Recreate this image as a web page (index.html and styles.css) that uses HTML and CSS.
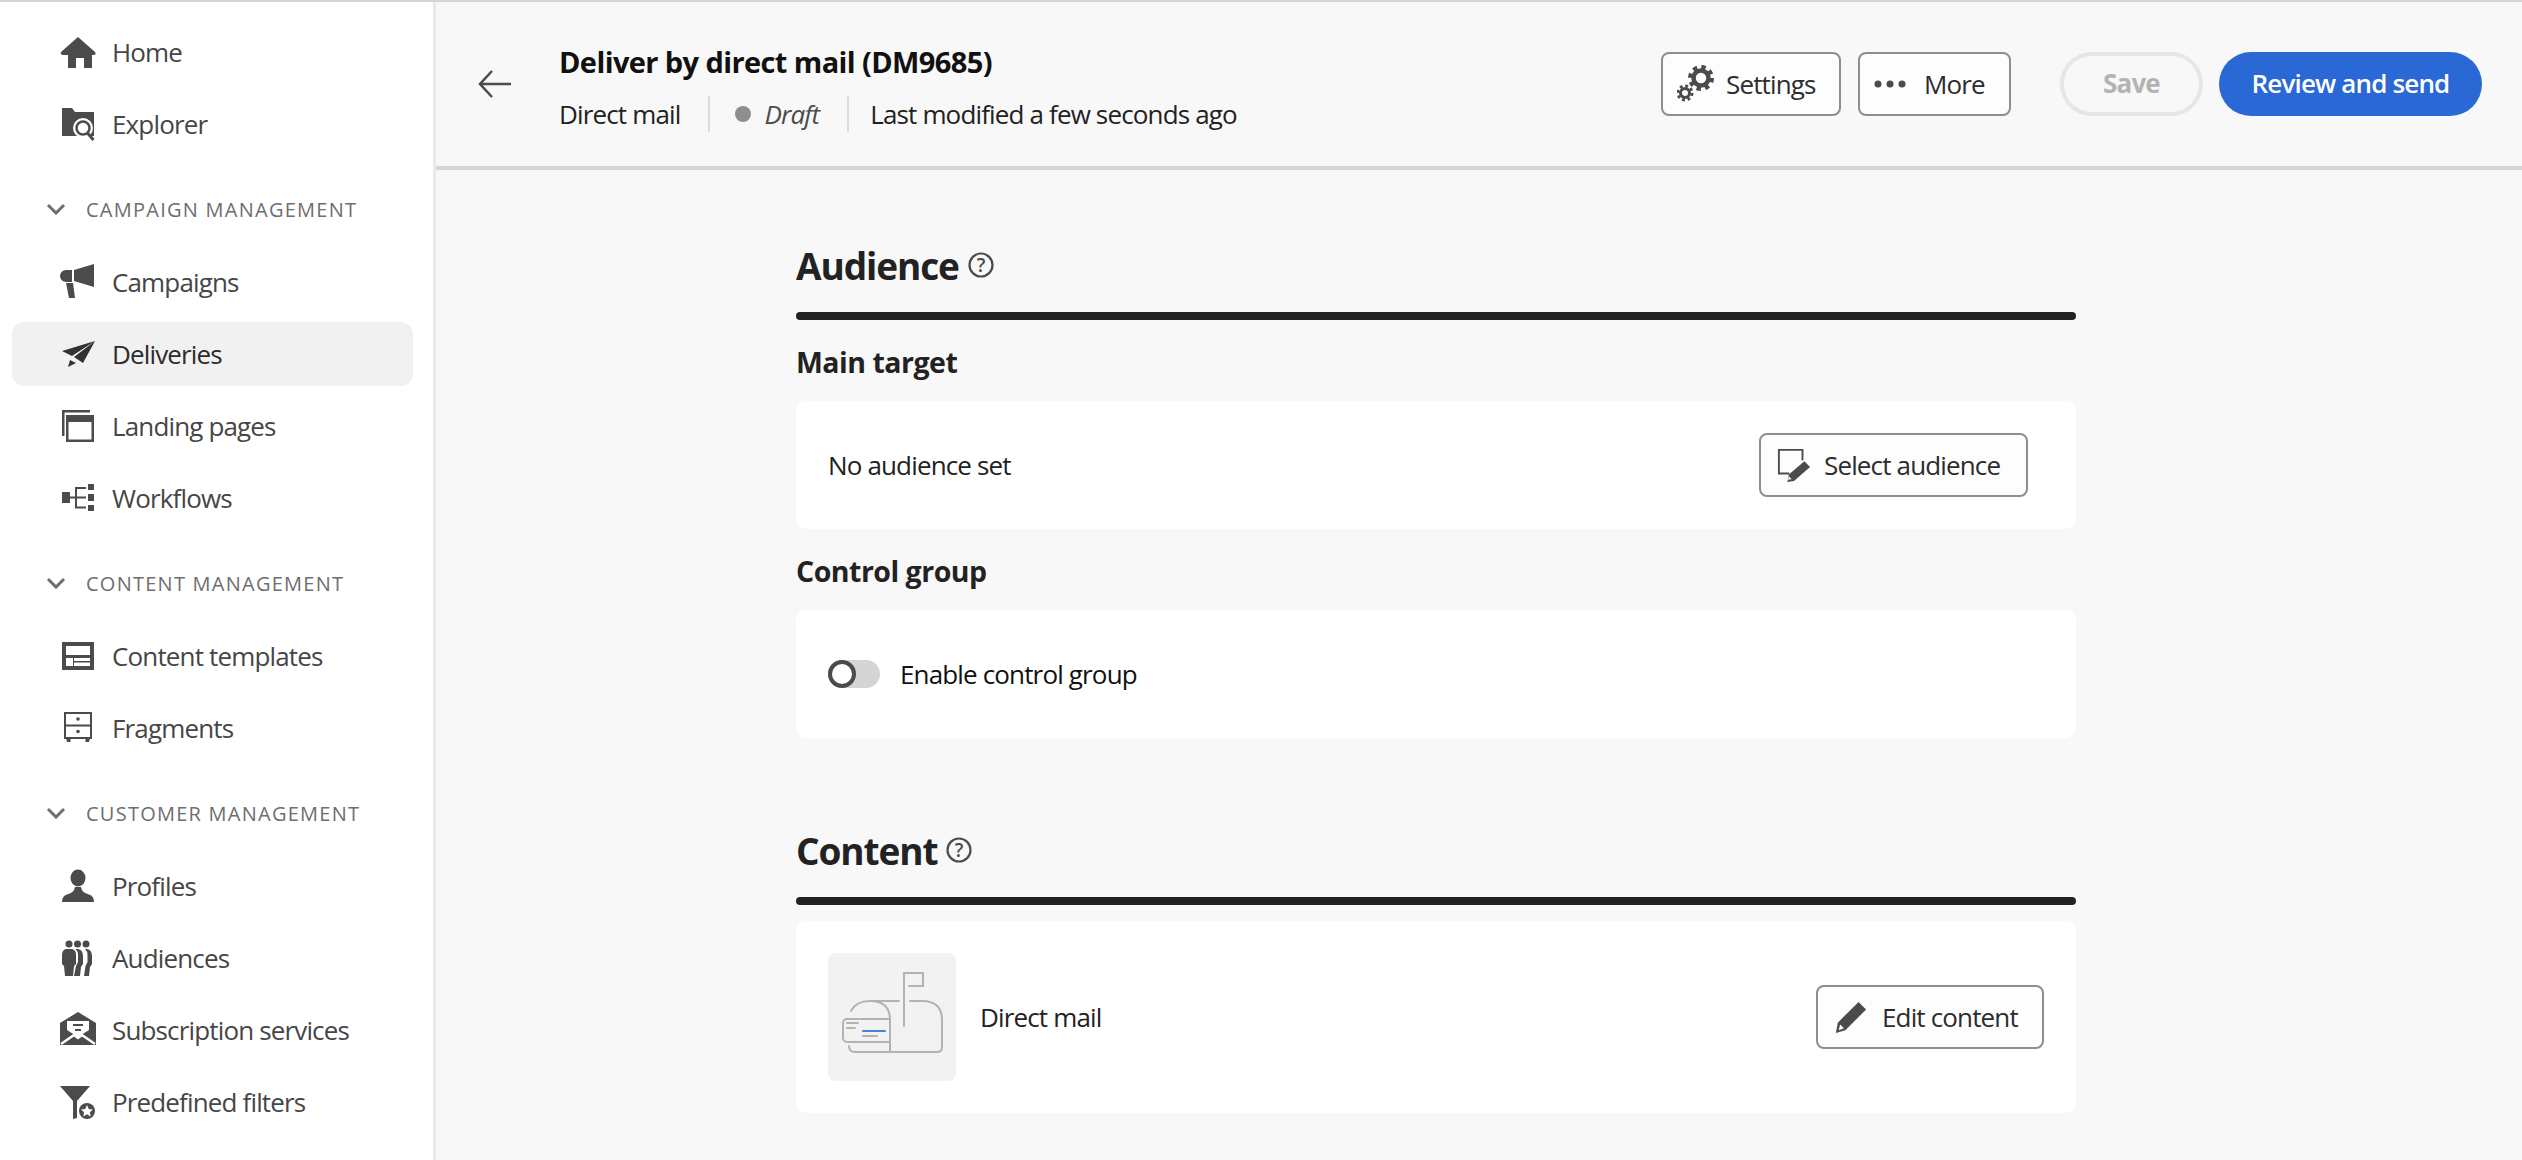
FILE: index.html
```html
<!DOCTYPE html>
<html lang="en">
<head>
  <meta charset="UTF-8" />
  <title>Deliver by direct mail (DM9685)</title>
  <link rel="stylesheet" href="styles.css">
</head>
<body>
<div class="app">

  <!-- left nav -->
  <nav class="sidebar">
    <a class="nav-item">
      <svg class="nav-icon" viewBox="0 0 36 36"><path d="M18 3 35 18q1.500 2.500-1 3h-2v13h-8V24h-8v10H8V21H3q-3-.5-2-3z"/></svg>
      <span>Home</span>
    </a>
    <a class="nav-item">
      <svg class="nav-icon" viewBox="0 0 36 36"><path d="M2 2h10l3 4h19v24H2z"/><circle cx="23" cy="22" r="10" fill="#fff"/><circle cx="23" cy="22" r="6.500" fill="none" stroke="#4b4b4b" stroke-width="2.500"/><path d="m27.500 27 6 7" stroke="#4b4b4b" stroke-width="3" fill="none"/></svg>
      <span>Explorer</span>
    </a>

    <div class="nav-section">
      <svg class="chevron" viewBox="0 0 20 12"><path d="M2 2l8 8 8-8" fill="none" stroke="#6e6e6e" stroke-width="3"/></svg>
      <span>CAMPAIGN MANAGEMENT</span>
    </div>
    <a class="nav-item">
      <svg class="nav-icon" viewBox="0 0 36 36"><path d="M14 6 34 0v23l-20-6zM12 6H6a6 6 0 0 0 0 12h6zM6 19h7l2 15H9z"/></svg>
      <span>Campaigns</span>
    </a>
    <a class="nav-item active">
      <svg class="nav-icon" viewBox="0 0 36 36"><path d="M35 5 2 15l10 5zM35 5 14 21l9 6zM10 24l6 3-8 4z"/></svg>
      <span>Deliveries</span>
    </a>
    <a class="nav-item">
      <svg class="nav-icon" viewBox="0 0 36 36"><path d="M2 2h28v2.500H4.500V28H2z"/><path d="M6 7h28v27H6zm2.500 7v17.500h23V14z" fill-rule="evenodd"/></svg>
      <span>Landing pages</span>
    </a>
    <a class="nav-item">
      <svg class="nav-icon" viewBox="0 0 36 36"><path d="M2 12h8v11H2zM28 4h6v6h-6zM28 14h6v7h-6zM28 25h6v6h-6z"/><path d="M10 17.500h16M16 17.500V8h10M16 17.500V27.500h10" fill="none" stroke="#4b4b4b" stroke-width="2"/></svg>
      <span>Workflows</span>
    </a>

    <div class="nav-section">
      <svg class="chevron" viewBox="0 0 20 12"><path d="M2 2l8 8 8-8" fill="none" stroke="#6e6e6e" stroke-width="3"/></svg>
      <span>CONTENT MANAGEMENT</span>
    </div>
    <a class="nav-item">
      <svg class="nav-icon" viewBox="0 0 36 36"><path fill-rule="evenodd" d="M2 4h32v28H2zM6 8v9h24V8zM6 20v8h7v-8zM14 20v3h16v-3zM14 24.500V28h16v-3.500z"/></svg>
      <span>Content templates</span>
    </a>
    <a class="nav-item">
      <svg class="nav-icon" viewBox="0 0 36 36"><path d="M5 3h26v25H5zM5 15.500h26" fill="none" stroke="#4b4b4b" stroke-width="2"/><circle cx="18" cy="9" r="1.800"/><circle cx="18" cy="21.500" r="1.800"/><path d="M6 28h4.500v4H7zM25.500 28H30l-1 4h-3.500z"/></svg>
      <span>Fragments</span>
    </a>

    <div class="nav-section">
      <svg class="chevron" viewBox="0 0 20 12"><path d="M2 2l8 8 8-8" fill="none" stroke="#6e6e6e" stroke-width="3"/></svg>
      <span>CUSTOMER MANAGEMENT</span>
    </div>
    <a class="nav-item">
      <svg class="nav-icon" viewBox="0 0 36 36"><ellipse cx="18" cy="10" rx="7.500" ry="8.500"/><path d="M2 34q0-6 5-7.500 6-2 7-4.500l1-3h6l1 3q1 2.500 7 4.500 5 1.500 5 7.500z"/></svg>
      <span>Profiles</span>
    </a>
    <a class="nav-item">
      <svg class="nav-icon" viewBox="0 0 36 36"><circle cx="9" cy="4" r="3.500"/><circle cx="17.500" cy="4" r="3.500"/><circle cx="26" cy="4" r="3.500"/><path d="M27 9q5 1 5 7v8l-2 3-1 9h-5l1.500-10 2-4v-7q0-4-2.500-6z"/><path d="M18 9q5 1 5 7v8l-2 3-1 9h-6l2-10 2-4v-7q0-4-2.500-6z"/><path d="M6 9h6q4 1 4 6v9l-2 2-1 10H5L4 26l-2-2v-9q0-5 4-6z"/></svg>
      <span>Audiences</span>
    </a>
    <a class="nav-item">
      <svg class="nav-icon" viewBox="0 0 36 36"><path d="M18 0 36 11v22H0V11z"/><path d="M7 9h22v9l-11 7-11-7z" fill="#fff"/><path d="M13 13h10M15 18h6" stroke="#4b4b4b" stroke-width="2"/><path d="M1 32l13-9 4 3 4-3 13 9" fill="none" stroke="#fff" stroke-width="2.500"/></svg>
      <span>Subscription services</span>
    </a>
    <a class="nav-item">
      <svg class="nav-icon" viewBox="0 0 36 36"><path d="M0 2h30L17 17v17l-4 1V17z"/><circle cx="27" cy="27" r="10" fill="#fff"/><circle cx="27" cy="27" r="8"/><path d="m27 21 1.800 3.900 4.200.500-3.100 2.800.8 4.200-3.700-2.100-3.700 2.100.8-4.200-3.100-2.800 4.200-.5z" fill="#fff"/></svg>
      <span>Predefined filters</span>
    </a>
  </nav>

  <div class="page">
    <header class="topbar">
      <svg class="back" viewBox="0 0 36 32"><path d="M34 16H3M15 3 3 16l12 13" fill="none" stroke="#4b4b4b" stroke-width="2.500"/></svg>
      <div class="title-block">
        <div class="title">Deliver by direct mail (DM9685)</div>
        <div class="meta">
          <span class="meta-type">Direct mail</span>
          <span class="meta-status"><i class="dot"></i><em>Draft</em></span>
          <span class="meta-date">Last modified a few seconds ago</span>
        </div>
      </div>
      <div class="actions">
        <button class="btn btn-settings">
          <svg class="gears" viewBox="0 0 38 38">
            <circle cx="24" cy="13" r="7.500" fill="none" stroke="#4b4b4b" stroke-width="4.500"/>
            <circle cx="24" cy="13" r="11" fill="none" stroke="#4b4b4b" stroke-width="4" stroke-dasharray="4.400 4.240"/>
            <circle cx="8" cy="28" r="4.500" fill="none" stroke="#4b4b4b" stroke-width="3"/>
            <circle cx="8" cy="28" r="7" fill="none" stroke="#4b4b4b" stroke-width="3" stroke-dasharray="2.800 2.700"/>
          </svg>
          Settings
        </button>
        <button class="btn btn-more">
          <svg class="dots" viewBox="0 0 32 8"><circle cx="4" cy="4" r="3.500"/><circle cx="16" cy="4" r="3.500"/><circle cx="28" cy="4" r="3.500"/></svg>
          More
        </button>
        <button class="pill pill-save">Save</button>
        <button class="pill pill-send">Review and send</button>
      </div>
    </header>

    <main class="content">
      <div class="section-head">
        <h2>Audience</h2>
        <svg class="help" viewBox="0 0 26 26"><circle cx="13" cy="13" r="11.500" fill="none" stroke="#4b4b4b" stroke-width="2.200"/><text x="13" y="20" text-anchor="middle">?</text></svg>
      </div>
      <div class="rule"></div>

      <h3>Main target</h3>
      <div class="card card-row">
        <span>No audience set</span>
        <button class="btn btn-select">
          <svg class="btn-icon" viewBox="0 0 36 36"><path d="M27 13V2H2v25h11" fill="none" stroke="#4b4b4b" stroke-width="2"/><path d="M29 14l6 6-17 15-7 1 1.500-8z" fill="#4b4b4b"/><path d="m12.500 30 3 3-3.800.700z" fill="#fff"/></svg>
          Select audience
        </button>
      </div>

      <h3>Control group</h3>
      <div class="card card-row">
        <label class="toggle">
          <span class="track"><span class="knob"></span></span>
          Enable control group
        </label>
      </div>

      <div class="section-head section-content">
        <h2>Content</h2>
        <svg class="help" viewBox="0 0 26 26"><circle cx="13" cy="13" r="11.500" fill="none" stroke="#4b4b4b" stroke-width="2.200"/><text x="13" y="20" text-anchor="middle">?</text></svg>
      </div>
      <div class="rule"></div>

      <div class="card card-row card-content">
        <div class="content-left">
          <div class="thumb">
            <svg viewBox="0 0 128 128" width="128" height="128" fill="none" stroke="#b3b3b3" stroke-width="2" stroke-linecap="round">
              <path d="M76 73V20H95V33H81"/>
              <path d="M23 58Q28 48 42 48H71M42 48Q62 48 62 67V99"/>
              <path d="M82 48H94Q114 48 114 67V94Q114 99 109 99H27Q21 99 21 93"/>
              <path d="M62 66H19A4 4 0 0 0 15 70V85A4 4 0 0 0 19 89H62"/>
              <path d="M19 70H30M19 75H27M35 83H49"/>
              <path d="M35 78H57" stroke="#4a7fdc"/>
            </svg>
          </div>
          <span>Direct mail</span>
        </div>
        <button class="btn btn-edit">
          <svg class="btn-icon" viewBox="0 0 36 36"><path d="M26 2l8 8L12 32l-10 3 2-11z" fill="#4b4b4b"/><path d="m6.500 26 4 4-5.500 2z" fill="#fff"/></svg>
          Edit content
        </button>
      </div>
    </main>
  </div>
</div>
</body>
</html>
```

FILE: styles.css
```css
html, body {
  margin: 0;
  height: 100%;
  overflow: hidden;
}

body {
  font-family: 'Open Sans', 'Noto Sans', sans-serif;
  font-size: 26px;
  letter-spacing: -0.85px;
  color: #222;
  background: #f8f8f8;
}

.app {
  display: flex;
  height: 1158px;
  border-top: 2px solid #d5d5d5;
}

/* sidebar */
.sidebar {
  width: 436px;
  flex: none;
  box-sizing: border-box;
  padding-top: 18px;
  background: #fff;
  border-right: 3px solid #e9e9e9;
}

.nav-item {
  display: flex;
  align-items: center;
  gap: 16px;
  width: 401px;
  height: 64px;
  box-sizing: border-box;
  margin: 0 0 8px 12px;
  padding-left: 48px;
  border-radius: 12px;
  color: #464646;
}

.nav-item.active {
  background: #f1f1f1;
  color: #2c2c2c;
}

.nav-icon {
  width: 36px;
  height: 36px;
  flex: none;
  fill: #4b4b4b;
}

.active .nav-icon {
  fill: #323232;
}

.nav-section {
  display: flex;
  align-items: center;
  height: 40px;
  margin: 33px 0 21px;
  padding-left: 46px;
  gap: 20px;
  font-size: 20px;
  letter-spacing: 1.25px;
  color: #6e6e6e;
}

.chevron {
  width: 20px;
  height: 12px;
  flex: none;
}

/* top bar */
.page {
  flex: 1;
  min-width: 0;
}

.topbar {
  display: flex;
  align-items: center;
  height: 164px;
  border-bottom: 4px solid #d5d5d5;
  padding: 0 40px 0 41px;
}

.back {
  width: 36px;
  height: 32px;
  flex: none;
  margin-right: 46px;
}

.title-block {
  margin-top: 6px;
}

.title {
  font-size: 29px;
  font-weight: 700;
  color: #111;
  letter-spacing: -0.6px;
  line-height: 40px;
}

.meta {
  display: flex;
  align-items: center;
  margin-top: 14px;
  height: 36px;
}

.meta-type {
  padding-right: 28px;
  border-right: 2px solid #dcdcdc;
}

.meta-status {
  display: flex;
  align-items: center;
  padding: 0 28px 0 25px;
  border-right: 2px solid #dcdcdc;
  color: #4b4b4b;
}

.dot {
  width: 16px;
  height: 16px;
  border-radius: 50%;
  background: #8e8e8e;
  margin-right: 13px;
}

.meta-date {
  padding-left: 21px;
}

.actions {
  display: flex;
  align-items: center;
  margin-left: auto;
}

button {
  font: inherit;
  letter-spacing: inherit;
  cursor: pointer;
}

.btn {
  display: flex;
  align-items: center;
  height: 64px;
  box-sizing: border-box;
  border: 2px solid #8e8e8e;
  border-radius: 8px;
  background: #fdfdfd;
  color: #2c2c2c;
  padding: 0 0 0 14px;
}

.btn-settings {
  width: 180px;
  gap: 11px;
}

.gears {
  width: 38px;
  height: 38px;
}

.btn-more {
  width: 153px;
  margin-left: 17px;
  gap: 18px;
}

.dots {
  width: 32px;
  height: 8px;
  fill: #4b4b4b;
}

.pill {
  height: 64px;
  box-sizing: border-box;
  border-radius: 32px;
  font-weight: 600;
  padding: 0 0 2px;
}

.pill-save {
  width: 143px;
  margin-left: 49px;
  border: 4px solid #e6e6e6;
  background: transparent;
  color: #b3b3b3;
  font-weight: 700;
}

.pill-send {
  width: 263px;
  margin-left: 16px;
  border: none;
  background: #2a68d6;
  color: #fff;
}

/* main column */
.content {
  width: 1280px;
  margin-left: 360px;
  padding-top: 70px;
}

.section-head {
  display: flex;
  align-items: center;
  gap: 9px;
  height: 50px;
}

.section-content {
  margin-top: 87px;
}

h2 {
  margin: 0;
  font-size: 37px;
  font-weight: 700;
  letter-spacing: -1.1px;
  color: #222;
}

.help {
  width: 26px;
  height: 26px;
  flex: none;
}

.help text {
  font-family: 'Open Sans', sans-serif;
  font-size: 19px;
  font-weight: 600;
  letter-spacing: 0;
  fill: #4b4b4b;
}

.rule {
  height: 8px;
  margin-top: 22px;
  border-radius: 4px;
  background: #222;
}

h3 {
  margin: 22px 0 19px;
  font-size: 28.500px;
  font-weight: 700;
  letter-spacing: -0.5px;
  line-height: 40px;
  color: #222;
}

.card {
  background: #fff;
  border-radius: 10px;
  height: 128px;
  box-sizing: border-box;
  padding: 0 32px;
}

.card-row {
  display: flex;
  align-items: center;
  justify-content: space-between;
}

.btn-select {
  width: 269px;
  margin-right: 16px;
  gap: 13px;
  padding-left: 16px;
}

.btn-icon {
  width: 34px;
  height: 36px;
  flex: none;
}

.toggle {
  display: flex;
  align-items: center;
  gap: 20px;
  color: #111;
}

.track {
  display: block;
  width: 52px;
  height: 28px;
  border-radius: 14px;
  background: #d5d5d5;
}

.knob {
  display: block;
  width: 28px;
  height: 28px;
  box-sizing: border-box;
  border-radius: 50%;
  border: 4px solid #4b4b4b;
  background: #fff;
}

.card-content {
  height: 192px;
  margin-top: 16px;
}

.content-left {
  display: flex;
  align-items: center;
  gap: 24px;
}

.thumb {
  width: 128px;
  height: 128px;
  border-radius: 8px;
  background: #f2f2f2;
}

.btn-edit {
  width: 228px;
  gap: 14px;
  padding-left: 16px;
}
```
